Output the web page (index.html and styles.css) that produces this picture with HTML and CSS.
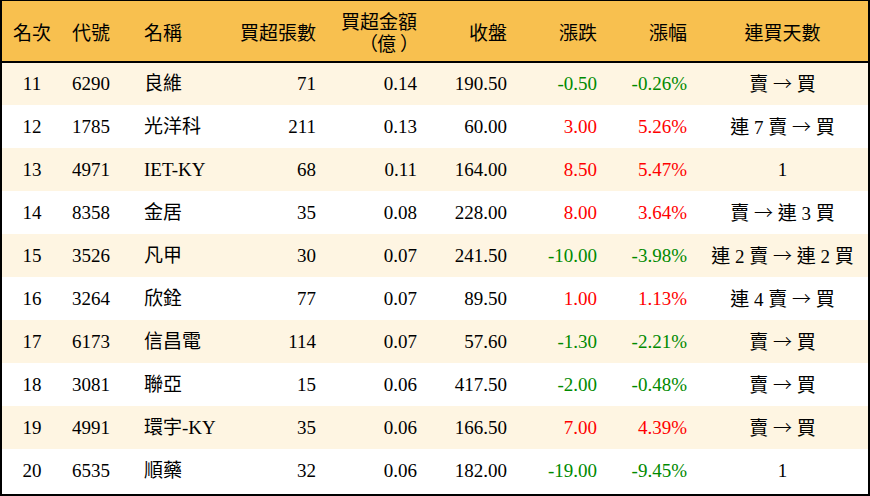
FILE: index.html
```html
<!DOCTYPE html>
<html lang="zh-Hant">
<head>
<meta charset="utf-8">
<link rel="stylesheet" href="styles.css">
</head>
<body>
<div class="frame">
<table class="rank">
<colgroup>
<col class="c1"><col class="c2"><col class="c3"><col class="c4"><col class="c5"><col class="c6"><col class="c7"><col class="c8"><col class="c9">
</colgroup>
<thead>
<tr>
<th class="ctr">名次</th>
<th class="lft">代號</th>
<th class="lft">名稱</th>
<th class="rgt">買超張數</th>
<th class="rgt two">買超金額<br><span class="paren pl">（</span>億<span class="paren pr">）</span></th>
<th class="rgt">收盤</th>
<th class="rgt">漲跌</th>
<th class="rgt">漲幅</th>
<th class="ctr">連買天數</th>
</tr>
</thead>
<tbody>
<tr><td class="ctr">11</td><td class="lft">6290</td><td class="lft">良維</td><td class="rgt">71</td><td class="rgt">0.14</td><td class="rgt">190.50</td><td class="rgt dn">-0.50</td><td class="rgt dn">-0.26%</td><td class="ctr">賣 <span class="arr">→</span> 買</td></tr>
<tr><td class="ctr">12</td><td class="lft">1785</td><td class="lft">光洋科</td><td class="rgt">211</td><td class="rgt">0.13</td><td class="rgt">60.00</td><td class="rgt up">3.00</td><td class="rgt up">5.26%</td><td class="ctr">連 7 賣 <span class="arr">→</span> 買</td></tr>
<tr><td class="ctr">13</td><td class="lft">4971</td><td class="lft">IET-KY</td><td class="rgt">68</td><td class="rgt">0.11</td><td class="rgt">164.00</td><td class="rgt up">8.50</td><td class="rgt up">5.47%</td><td class="ctr">1</td></tr>
<tr><td class="ctr">14</td><td class="lft">8358</td><td class="lft">金居</td><td class="rgt">35</td><td class="rgt">0.08</td><td class="rgt">228.00</td><td class="rgt up">8.00</td><td class="rgt up">3.64%</td><td class="ctr">賣 <span class="arr">→</span> 連 3 買</td></tr>
<tr><td class="ctr">15</td><td class="lft">3526</td><td class="lft">凡甲</td><td class="rgt">30</td><td class="rgt">0.07</td><td class="rgt">241.50</td><td class="rgt dn">-10.00</td><td class="rgt dn">-3.98%</td><td class="ctr">連 2 賣 <span class="arr">→</span> 連 2 買</td></tr>
<tr><td class="ctr">16</td><td class="lft">3264</td><td class="lft">欣銓</td><td class="rgt">77</td><td class="rgt">0.07</td><td class="rgt">89.50</td><td class="rgt up">1.00</td><td class="rgt up">1.13%</td><td class="ctr">連 4 賣 <span class="arr">→</span> 買</td></tr>
<tr><td class="ctr">17</td><td class="lft">6173</td><td class="lft">信昌電</td><td class="rgt">114</td><td class="rgt">0.07</td><td class="rgt">57.60</td><td class="rgt dn">-1.30</td><td class="rgt dn">-2.21%</td><td class="ctr">賣 <span class="arr">→</span> 買</td></tr>
<tr><td class="ctr">18</td><td class="lft">3081</td><td class="lft">聯亞</td><td class="rgt">15</td><td class="rgt">0.06</td><td class="rgt">417.50</td><td class="rgt dn">-2.00</td><td class="rgt dn">-0.48%</td><td class="ctr">賣 <span class="arr">→</span> 買</td></tr>
<tr><td class="ctr">19</td><td class="lft">4991</td><td class="lft">環宇-KY</td><td class="rgt">35</td><td class="rgt">0.06</td><td class="rgt">166.50</td><td class="rgt up">7.00</td><td class="rgt up">4.39%</td><td class="ctr">賣 <span class="arr">→</span> 買</td></tr>
<tr><td class="ctr">20</td><td class="lft">6535</td><td class="lft">順藥</td><td class="rgt">32</td><td class="rgt">0.06</td><td class="rgt">182.00</td><td class="rgt dn">-19.00</td><td class="rgt dn">-9.45%</td><td class="ctr">1</td></tr>
</tbody>
</table>
</div>
</body>
</html>
```
FILE: styles.css
```css
html, body {
  margin: 0;
  padding: 0;
  background: #ffffff;
}
body {
  width: 870px;
  height: 496px;
  overflow: hidden;
  font-family: "Liberation Serif", "Noto Sans CJK TC", serif;
  font-size: 19px;
  color: #000;
}
.frame {
  box-sizing: border-box;
  width: 870px;
  height: 496px;
  border-style: solid;
  border-color: #000;
  border-width: 1px 2px 2px 2px;
  background: #fff;
}
.rank {
  width: 866px;
  border-collapse: collapse;
  border-spacing: 0;
  table-layout: fixed;
}
.c1 { width: 60px; }
.c2 { width: 72px; }
.c3 { width: 92px; }
.c4 { width: 100px; }
.c5 { width: 101px; }
.c6 { width: 90px; }
.c7 { width: 90px; }
.c8 { width: 90px; }
.c9 { width: 171px; }
thead tr {
  background: #f8c04f;
  height: 61px;
}
thead th {
  font-weight: normal;
  padding: 5px 10px 0 10px;
  line-height: 22px;
  border-bottom: 2px solid #000;
  white-space: nowrap;
  vertical-align: middle;
}
.paren {
  display: inline-block;
  text-align: left;
}
.pl { width: 18px; }
.pr { width: 17px; padding-left: 4px; }
tbody tr {
  height: 43px;
}
tbody tr:nth-child(odd) {
  background: #fef5e2;
}
tbody tr:nth-child(even) {
  background: #ffffff;
}
tbody td {
  padding: 0 10px;
  line-height: 22px;
  white-space: nowrap;
  vertical-align: middle;
}
.arr {
  font-family: "Noto Sans CJK TC", sans-serif;
  font-weight: 300;
}
.ctr { text-align: center; }
.lft { text-align: left; }
.rgt { text-align: right; }
.up { color: #ff0000; }
.dn { color: #008a00; }
```
